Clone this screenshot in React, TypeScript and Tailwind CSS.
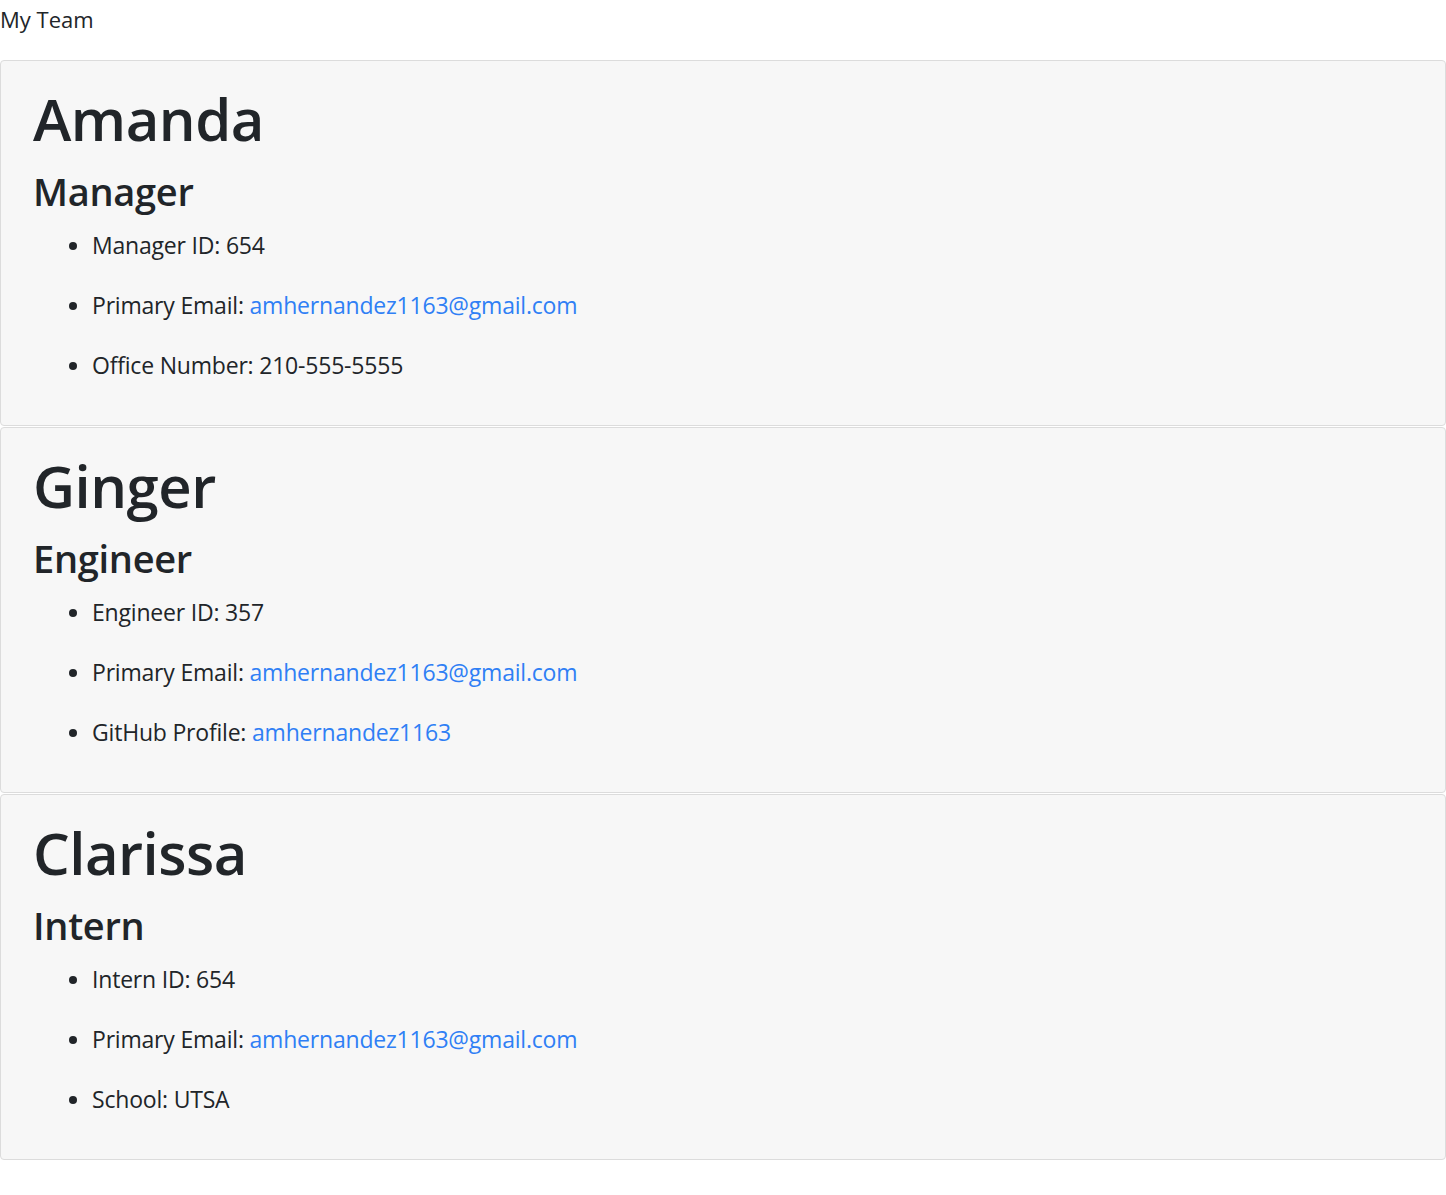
const team = [
  {
    name: 'Amanda',
    role: 'Manager',
    items: [
      { label: 'Manager ID:', value: '654' },
      { label: 'Primary Email:', value: 'amhernandez1163@gmail.com', link: true },
      { label: 'Office Number:', value: '210-555-5555' },
    ],
  },
  {
    name: 'Ginger',
    role: 'Engineer',
    items: [
      { label: 'Engineer ID:', value: '357' },
      { label: 'Primary Email:', value: 'amhernandez1163@gmail.com', link: true },
      { label: 'GitHub Profile:', value: 'amhernandez1163', link: true },
    ],
  },
  {
    name: 'Clarissa',
    role: 'Intern',
    items: [
      { label: 'Intern ID:', value: '654' },
      { label: 'Primary Email:', value: 'amhernandez1163@gmail.com', link: true },
      { label: 'School:', value: 'UTSA' },
    ],
  },
];

export default function App() {
  return (
    <div className="min-h-screen bg-white text-[#212529] font-['Open_Sans',sans-serif]">
      <div className="h-[60px] pt-[4px] text-[22px] leading-[30px]">My Team</div>

      {team.map((member) => (
        <div
          key={member.name}
          className="mb-[1px] h-[366px] rounded-[4px] border border-[#dcdcdc] bg-[#f7f7f7] px-[32px] pt-[28px]"
        >
          <h1 className="text-[58px] font-semibold leading-[60px] tracking-[-0.5px]">{member.name}</h1>
          <h2 className="mt-[21px] text-[38px] font-semibold leading-[42px] tracking-[-0.3px]">{member.role}</h2>
          <ul className="mt-[16px] list-disc pl-[59px] text-[23px] leading-[34px] tracking-[-0.2px]">
            {member.items.map((item) => (
              <li key={item.label} className="mb-[26px]">
                {item.label}{' '}
                {item.link ? (
                  <a href="#" className="text-[#2f7ff5]">
                    {item.value}
                  </a>
                ) : (
                  item.value
                )}
              </li>
            ))}
          </ul>
        </div>
      ))}
    </div>
  );
}
